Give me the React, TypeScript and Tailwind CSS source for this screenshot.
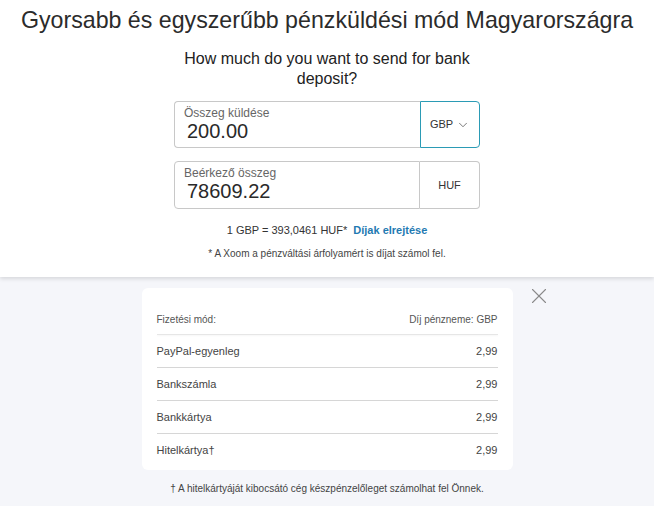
import { X, ChevronDown } from "lucide-react";

const fees = [
  { name: "PayPal-egyenleg", fee: "2,99" },
  { name: "Bankszámla", fee: "2,99" },
  { name: "Bankkártya", fee: "2,99" },
  { name: "Hitelkártya†", fee: "2,99" },
];

export default function App() {
  return (
    <div className="w-[654px] h-[506px] overflow-hidden bg-[#f5f6fa] flex flex-col font-['Liberation_Sans',Arial,sans-serif]">
      {/* Top: amount form */}
      <div className="h-[277px] shrink-0 bg-white flex flex-col items-center shadow-[0_2px_4px_rgba(0,0,0,0.12)] relative z-10">
        <h1 className="mt-[6px] text-[23.2px] leading-[28px] font-light text-[#2b2b2b] whitespace-nowrap">
          Gyorsabb és egyszerűbb pénzküldési mód Magyarországra
        </h1>
        <p className="mt-[15px] w-[300px] text-center text-[16px] leading-[20px] text-[#222]">
          How much do you want to send for bank deposit?
        </p>

        <div className="mt-[12px] flex flex-col gap-[13px]">
          <div className="flex h-[47px] w-[306px]">
            <div className="flex-1 border border-[#c8c8c8] border-r-0 rounded-l-[4px] pl-[9px] pt-[4px]">
              <div className="text-[12px] leading-[14px] text-[#666]">Összeg küldése</div>
              <div className="pl-[3px] text-[20px] leading-[23px] text-[#2a2a2a]">200.00</div>
            </div>
            <div className="w-[60px] border border-[#2b9bb5] rounded-r-[4px] flex items-center justify-center gap-[3px] text-[11px] text-[#333]">
              GBP
              <ChevronDown size={14} strokeWidth={1.2} className="text-[#444]" />
            </div>
          </div>

          <div className="flex h-[48px] w-[306px]">
            <div className="flex-1 border border-[#c8c8c8] rounded-l-[4px] pl-[9px] pt-[4px]">
              <div className="text-[12px] leading-[14px] text-[#666]">Beérkező összeg</div>
              <div className="pl-[3px] text-[20px] leading-[23px] text-[#2a2a2a]">78609.22</div>
            </div>
            <div className="w-[60px] border border-l-0 border-[#c8c8c8] rounded-r-[4px] flex items-center justify-center text-[11px] text-[#333]">
              HUF
            </div>
          </div>
        </div>

        <div className="mt-[14px] text-[11px] leading-[14px] text-[#333]">
          1 GBP = 393,0461 HUF*
          <span className="ml-[6px] font-bold text-[#1f7ab2]">Díjak elrejtése</span>
        </div>
        <div className="mt-[11px] text-[10px] leading-[12px] text-[#444]">
          * A Xoom a pénzváltási árfolyamért is díjat számol fel.
        </div>
      </div>

      {/* Fee table */}
      <div className="flex flex-col items-center pt-[11px]">
        <div className="relative">
          <div className="w-[371px] bg-white rounded-[6px] px-[15px] pt-[22px] pb-[3px]">
            <div className="h-[18px] flex items-center justify-between text-[10px] text-[#555]">
              <span>Fizetési mód:</span>
              <span>Díj pénzneme: GBP</span>
            </div>
            <div className="mt-[6px] border-b border-[#e6e6e6] shadow-[0_1px_2px_rgba(0,0,0,0.05)]" />
            {fees.map((f, i) => (
              <div
                key={f.name}
                className={`h-[33px] flex items-center justify-between text-[11px] text-[#444] ${
                  i < fees.length - 1 ? "border-b border-[#d6d6d6]" : ""
                }`}
              >
                <span>{f.name}</span>
                <span>{f.fee}</span>
              </div>
            ))}
          </div>
          <X
            size={26}
            strokeWidth={1}
            className="absolute left-[384px] top-[-5px] text-[#8a8a8a]"
          />
        </div>
        <div className="mt-[13px] text-[10px] leading-[12px] text-[#444]">
          † A hitelkártyáját kibocsátó cég készpénzelőleget számolhat fel Önnek.
        </div>
      </div>
    </div>
  );
}
